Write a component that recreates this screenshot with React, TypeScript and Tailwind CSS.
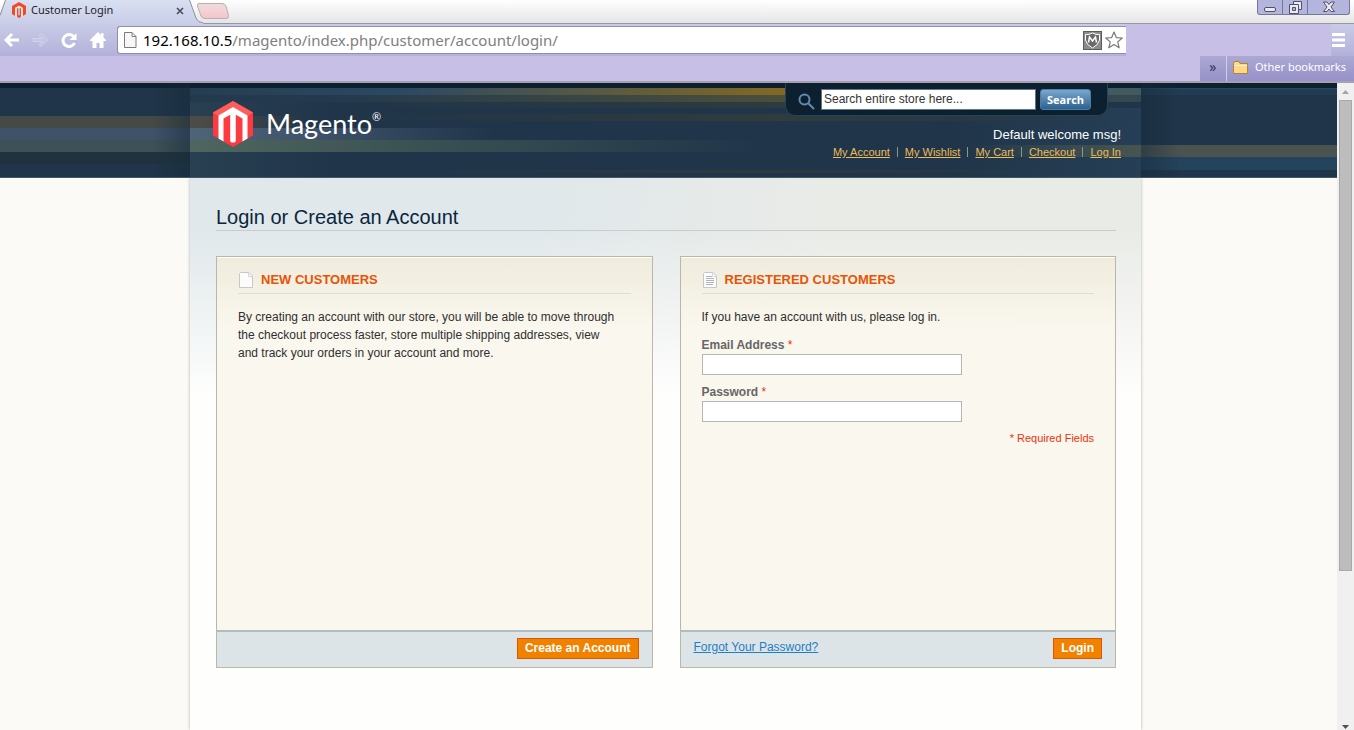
import type { ReactNode } from "react";

function MagentoMark({ className }: { className: string }) {
  return (
    <svg viewBox="0 0 40 46" className={className} aria-hidden="true">
      <path d="M20 0 40 11.5V34.5L20 46 0 34.5V11.5Z" fill="#fb3b41" />
      <path d="M20 0 40 11.5 34.5 15 20 6.5 5.5 15 0 11.5Z" fill="#ff5c5c" />
      <path d="M20 6 34.5 14.5V37.5L29.5 40.4V17.5L22.8 13.7V39.5Q22.8 41.5 20 41.5Q17.2 41.5 17.2 39.5V13.7L10.5 17.5V40.4L5.5 37.5V14.5Z" fill="#fff" />
    </svg>
  );
}

function PageIcon({ lines }: { lines?: boolean }) {
  return (
    <svg width="16" height="16" viewBox="0 0 16 16" fill="none" aria-hidden="true">
      <path d="M2.500 .5H11L14.500 4V15.500H1.500V1.500Z" fill="#fcfcfc" stroke="#c5c7c9" />
      <path d="M10.500 .5V4.500H14.500" stroke="#d5d7d9" />
      {lines && <path d="M4 4.500H10M4 6.500H12M4 8.500H12M4 10.500H12M4 12.500H11" stroke="#b0b2b4" />}
    </svg>
  );
}

function TabStrip() {
  return (
    <div className="relative flex h-6 justify-between bg-linear-to-b from-white to-[#e4e4e6]">
      <div className="absolute inset-x-0 bottom-0 h-px bg-[#98989e]" />
      <div className="relative flex h-6 w-[232px]">
        <svg width="232" height="24" viewBox="0 0 232 24" className="absolute inset-0" aria-hidden="true">
          <defs>
            <linearGradient id="tab" x1="0" y1="0" x2="0" y2="1">
              <stop offset="0" stopColor="#d9e0f1" />
              <stop offset="1" stopColor="#c9cde8" />
            </linearGradient>
            <linearGradient id="newTab" x1="0" y1="0" x2="0" y2="1">
              <stop offset="0" stopColor="#f0dcde" />
              <stop offset="1" stopColor="#f5c5ca" />
            </linearGradient>
          </defs>
          <path d="M0 24V16L5.500 0H189L196 18Q198 22.500 203 22.500V24Z" fill="url(#tab)" />
          <path d="M0 15.500 5.500 0M189.500 0 196 18Q198 22.500 203 22.500" fill="none" stroke="#8d8f9b" />
          <path d="M199 3.500H222Q225 3.500 226 6L228.500 15.500Q229 18.500 226 18.500H205Q202 18.500 201 16L197.500 6Q197 3.500 199 3.500Z" fill="url(#newTab)" stroke="#b5aeb2" />
        </svg>
        <div className="relative flex w-[184px] items-center pb-1 pl-3">
          <svg width="14" height="16" viewBox="0 0 14 16" aria-hidden="true">
            <path d="M7 0 14 4V12L11 14V6L7 3.700 3 6V14L0 12V4Z" fill="#f0492a" />
            <path d="M3 6 7 3.700 11 6V14L9 15V7H5V15L3 14Z" fill="#fbe3e0" />
            <path d="M5 6.500 6.300 5.800V13L7 13.500 7.700 13V5.800L9 6.500V14.800L7 16 5 14.800Z" fill="#f0492a" />
          </svg>
          <span className="ml-[5px] flex-1 text-[11px] text-[#1d1d28]">Customer Login</span>
          <button type="button" aria-label="Close tab" className="mt-px">
            <svg width="8" height="8" viewBox="0 0 8 8" fill="none" stroke="#4d4e5c" strokeWidth="1.700">
              <path d="M1 1 7 7M7 1 1 7" />
            </svg>
          </button>
        </div>
      </div>
      <div className="relative mr-1 flex h-[15px] rounded-b-[3px] border border-t-0 border-[#77779b] bg-[#b3b5dc]">
        <button type="button" aria-label="Minimize" className="flex w-[25px] items-center justify-center border-r border-[#77779b]">
          <svg width="13" height="13" viewBox="0 0 13 13">
            <rect x=".5" y="6.500" width="11" height="4" rx="1.500" fill="#e9e9f4" stroke="#50506a" />
          </svg>
        </button>
        <button type="button" aria-label="Restore" className="flex w-[25px] items-center justify-center border-r border-[#77779b]">
          <svg width="13" height="13" viewBox="0 0 13 13" fill="#e9e9f4" stroke="#50506a">
            <path d="M4.500 .5H12.500V8.500H4.500Z" />
            <path d="M.5 3.500H9.500V12.500H.5Z" />
            <path d="M3.500 6.500H6.500V9.500H3.500Z" fill="#b3b5dc" />
          </svg>
        </button>
        <button type="button" aria-label="Close" className="flex w-[41px] items-center justify-center">
          <svg width="12" height="12" viewBox="0 0 12 12">
            <path d="M.5 1H4L6 3.500 8 1H11.500L8 6 11.500 10.500H8L6 8 4 10.500H.5L4 6Z" fill="#e9e9f4" stroke="#50506a" />
          </svg>
        </button>
      </div>
    </div>
  );
}

function Toolbar() {
  return (
    <div className="flex h-8 items-center bg-linear-to-b from-[#c9cce7] to-[#b3b1da]">
      <div className="flex w-[117px] items-center gap-3 pl-1">
        <button type="button" aria-label="Back">
          <svg width="16" height="16" viewBox="0 0 16 16" fill="none" stroke="#fff" strokeWidth="3">
            <path d="M15 8H3M8 2 2 8 8 14" />
          </svg>
        </button>
        <button type="button" aria-label="Forward">
          <svg width="17" height="16" viewBox="0 0 17 16" fill="#c3c5e4" stroke="#d2d3ec">
            <path d="M1 6.500H10.500L7 3.500 9 1.500 15.500 8 9 14.500 7 12.500 10.500 9.500H1Z" />
          </svg>
        </button>
        <button type="button" aria-label="Reload">
          <svg width="17" height="17" viewBox="0 0 17 17" fill="none" stroke="#fff" strokeWidth="3">
            <path d="M13.500 11A6 6 0 1 1 12.500 4.500" />
            <path d="M15.500 1V8H8.500Z" fill="#fff" stroke="none" />
          </svg>
        </button>
        <button type="button" aria-label="Home">
          <svg width="16" height="16" viewBox="0 0 16 16" fill="#fff">
            <path d="M8 0 11 3V1H13.500V5.500L16 8V9H13.500V16H9.500V11H6.500V16H2.500V9H0V8Z" />
          </svg>
        </button>
      </div>
      <div className="flex h-7 min-w-0 flex-1 items-center rounded-l-[3px] border border-r-0 border-[#8d8fae] bg-white pl-1.5">
        <svg width="13" height="16" viewBox="0 0 13 16" fill="#f7f7f7" stroke="#7c7c7c" aria-hidden="true">
          <path d="M.5 .5H8L12 4.500V15.500H.5ZM8 .5V4.500H12" />
        </svg>
        <div className="ml-1.5 flex-1 truncate text-[15px] leading-6 text-[#808080]">
          <span className="text-black">192.168.10.5</span>/magento/index.php/customer/account/login/
        </div>
        <button type="button" aria-label="Site report">
          <svg width="19" height="19" viewBox="0 0 19 19">
            <rect x=".5" y=".5" width="18" height="18" fill="#8b8b8b" stroke="#5c5c5c" />
            <path d="M9.500 2Q13 4 16.500 3.500V9Q15.500 14 9.500 17Q3.500 14 2.500 9V3.500Q6 4 9.500 2Z" fill="#6b6b6b" stroke="#fff" />
            <path d="M5.500 11.500 6.500 6 9.500 10 12.500 6 13.500 11.500" fill="none" stroke="#fff" strokeWidth="1.500" />
          </svg>
        </button>
        <button type="button" aria-label="Bookmark this page" className="mx-[3px]">
          <svg width="18" height="18" viewBox="0 0 18 18" fill="#fff" stroke="#777" strokeLinejoin="round" strokeWidth="1.200">
            <path d="M9 1 11.300 6.600 17.300 7 12.700 10.900 14.200 16.800 9 13.600 3.800 16.800 5.300 10.900 .7 7 6.700 6.600Z" />
          </svg>
        </button>
      </div>
      <div className="h-full w-[205px] bg-[#c8bfe7]" />
      <button type="button" aria-label="Menu" className="w-[23px] pl-px">
        <svg width="14" height="14" viewBox="0 0 14 14" fill="#fff">
          <path d="M0 0H13V3H0ZM0 5.500H13V8.500H0ZM0 11H13V14H0Z" />
        </svg>
      </button>
    </div>
  );
}

function BookmarksBar() {
  return (
    <div className="flex h-[27px] justify-end border-b-2 border-[#a5a0b4] bg-[#c8bfe7]">
      <div className="flex bg-linear-to-b from-[#aba9d4] to-[#9791c8] text-[11px] text-white">
        <button type="button" aria-label="More bookmarks" className="w-[27px] border-r border-[#cfcde9] pb-1 text-[14px] text-[#33334a]">
          »
        </button>
        <button type="button" className="flex items-center gap-1.5 pr-2 pb-0.5 pl-1.5">
          <svg width="16" height="14" viewBox="0 0 16 14" fill="#fbd98a" stroke="#b98231" aria-hidden="true">
            <path d="M.5 2.500 1.500 .5H6L7 2.500H14.500V12.500H.5Z" />
            <path d="M1 4.500H14" stroke="#fff0c4" />
          </svg>
          Other bookmarks
        </button>
      </div>
    </div>
  );
}

const accountLinks = ["My Account", "My Wishlist", "My Cart", "Checkout", "Log In"];

function Header() {
  return (
    <header className="relative z-10 flex h-[95px] border-b border-[#405767] bg-[#203549]">
      <div className="flex-1 bg-[linear-gradient(to_right,transparent_80%,#15293a80),linear-gradient(#0d2030_0_5px,#203549_5px_33px,#454a46_33px_45px,#3f5268_45px_57px,#3e5156_57px_69px,#20323e_69px_81px,#203549_81px)]" />
      <div className="flex w-[951px] justify-between bg-[linear-gradient(#0d2030,#0d2030),linear-gradient(to_right,#263d50,#2b4963_22%,#836824_62%,#415a60_96%),linear-gradient(to_right,#233a4e_15%,#4b4e3b_62%,#33484f_96%),linear-gradient(to_right,#20354900_15%,#2d3b3e_62%,#203549),linear-gradient(to_right,#20354900_15%,#303c3d_62%,#20354900),linear-gradient(to_right,#4e4c47,#20354900_12%),linear-gradient(to_right,#506479,#3b5067_15%,#20354900_32%),linear-gradient(to_right,#4f665f,#3d5253_22%,#20354900_60%),linear-gradient(to_right,#20354900_82%,#47554f),linear-gradient(to_right,#20354900_20%,#2d3b3e_60%,#20354900),linear-gradient(to_right,#293f52,#203549_15%,#203549_80%,#263f56)] bg-[size:100%_5px,100%_7px,100%_7px,100%_6px,100%_7px,100%_12px,100%_12px,100%_12px,100%_12px,100%_3px,100%_100%] bg-[position:0_0,0_5px,0_12px,0_19px,0_31px,0_33px,0_45px,0_57px,0_62px,0_87px,0_0] bg-no-repeat">
        <a href="#home" className="mt-[18px] ml-[23px] flex h-[46px] gap-[13px] text-white">
          <MagentoMark className="h-[46px] w-10" />
          <span className="flex font-[Lato,sans-serif] text-[27px] leading-[46px]">
            Magento<span className="text-[11px] leading-8">®</span>
          </span>
        </a>
        <div className="flex flex-col items-end">
          <form className="mr-[33px] flex h-[33px] w-[323px] items-center rounded-b-[10px] border border-t-0 border-[#24435c] bg-[#0d2030] pl-3">
            <label htmlFor="search" aria-label="Search" className="mt-1">
              <svg width="17" height="17" viewBox="0 0 17 17" fill="none" stroke="#608bb2" strokeWidth="2">
                <circle cx="6.500" cy="6.500" r="5" />
                <path d="M10.500 10.500 16 16" />
              </svg>
            </label>
            <input
              id="search"
              defaultValue="Search entire store here..."
              className="ml-1.5 h-[21px] w-[215px] border border-[#5c7989] bg-white px-0.5 text-[12px] text-[#333]"
            />
            <button
              type="button"
              className="ml-1 h-[21px] w-[51px] rounded-[3px] border border-[#4a7da8] bg-linear-to-b from-[#7ba8cd] to-[#2b628f] font-['Open_Sans',sans-serif] text-[11px] leading-[19px] font-bold text-white"
            >
              Search
            </button>
          </form>
          <p className="mt-2.5 mr-5 text-[13px] leading-[18px] text-white">Default welcome msg!</p>
          <ul className="mr-5 flex text-[11px] leading-4 text-[#ebbc58]">
            {accountLinks.map((link, i) => (
              <li key={link} className="flex items-center">
                {i > 0 && <span className="mx-[7px] h-2.5 w-px bg-[#8a9a7c]" />}
                <a href="#account" className="underline">
                  {link}
                </a>
              </li>
            ))}
          </ul>
        </div>
      </div>
      <div className="flex-1 bg-[linear-gradient(to_right,#15293a80,transparent_20%),linear-gradient(#0d2030_0_5px,#29475d_5px_6px,#203d54_6px_12px,#203549_12px_62px,#4b5350_62px_74px,#24435c_74px_87px,#203549_87px)] pr-1.5" />
    </header>
  );
}

type PanelProps = {
  title: string;
  icon: ReactNode;
  footer: ReactNode;
  children: ReactNode;
};

function Panel({ title, icon, footer, children }: PanelProps) {
  return (
    <section className="flex flex-1 flex-col border border-[#bbb6a5]">
      <div className="min-h-[373px] flex-1 border-t border-white bg-[#faf7ee] bg-[linear-gradient(#efebdd,#faf7ee_70px)] px-[21px] pt-3.5">
        <h2 className="flex h-[22px] items-start gap-[7px] border-b border-[#dddcd6] text-[13px] leading-[15px] font-bold text-[#e65505]">
          {icon}
          {title}
        </h2>
        {children}
      </div>
      <div className="flex h-[37px] items-start border-t-2 border-[#b0bcc0] bg-[#dde4e7] px-[13px] pt-1.5">{footer}</div>
    </section>
  );
}

function OrangeButton({ children }: { children: ReactNode }) {
  return (
    <button type="button" className="ml-auto h-[21px] border border-[#de5400] bg-[#f18200] px-[7px] text-[12px] leading-[19px] font-bold text-white">
      {children}
    </button>
  );
}

function Field({ id, label, type }: { id: string; label: string; type: string }) {
  return (
    <div className="mb-2">
      <label htmlFor={id} className="block text-[12px] leading-[18px] font-bold text-[#666]">
        {label} <span className="font-normal text-[#eb340a]">*</span>
      </label>
      <input id={id} type={type} className="block h-[21px] w-[260px] border border-[#b6b6b6] bg-white px-1" />
    </div>
  );
}

function LoginPage() {
  return (
    <div className="flex flex-1">
      <div className="flex-1" />
      <main className="w-[951px] bg-[#fefefd] bg-[linear-gradient(#fefefd00_0,#fefefd00_50px,#fefefd_220px),linear-gradient(100deg,#e0e8eb_35%,#e9ebe7_65%)] bg-[size:100%_220px] bg-no-repeat pr-[25px] pl-[26px] shadow-[0_0_3px_#0000004d]">
        <h1 className="mt-[25px] h-7 border-b border-[#c9cccc] text-[20px] leading-7 text-[#0a263c]">Login or Create an Account</h1>
        <div className="mt-[25px] flex gap-[27px]">
          <Panel title="NEW CUSTOMERS" icon={<PageIcon />} footer={<OrangeButton>Create an Account</OrangeButton>}>
            <p className="mt-3.5 pr-2.5 text-[12px] leading-[18px] text-[#2f2f2f]">
              By creating an account with our store, you will be able to move through the checkout process faster, store multiple
              shipping addresses, view and track your orders in your account and more.
            </p>
          </Panel>
          <Panel
            title="REGISTERED CUSTOMERS"
            icon={<PageIcon lines />}
            footer={
              <>
                <a href="#forgot" className="text-[12px] leading-[18px] text-[#1e7ec8] underline">
                  Forgot Your Password?
                </a>
                <OrangeButton>Login</OrangeButton>
              </>
            }
          >
            <p className="mt-3.5 mb-2.5 text-[12px] leading-[18px] text-[#2f2f2f]">If you have an account with us, please log in.</p>
            <Field id="email" label="Email Address" type="email" />
            <Field id="password" label="Password" type="password" />
            <p className="text-right text-[11px] leading-4 text-[#eb340a]">* Required Fields</p>
          </Panel>
        </div>
      </main>
      <div className="flex-1 pr-1.5" />
    </div>
  );
}

function ScrollBar() {
  return (
    <div className="flex w-[17px] flex-col items-center bg-[#f0f0f0]">
      <svg width="17" height="17" viewBox="0 0 17 17" fill="#a3a3a3" aria-hidden="true">
        <path d="M5 11 8.500 7 12 11Z" />
      </svg>
      <div className="w-[13px] flex-[43] border border-[#a8a8a8] bg-[#bdbdbd]" />
      <div className="flex-[13]" />
      <svg width="17" height="17" viewBox="0 0 17 17" fill="#505050" aria-hidden="true">
        <path d="M5 12 8.500 16 12 12Z" />
      </svg>
    </div>
  );
}

export default function App() {
  return (
    <div className="flex min-h-screen flex-col font-['Liberation_Sans',Arial,sans-serif]">
      <div className="font-['Noto_Sans',sans-serif]">
        <TabStrip />
        <Toolbar />
        <BookmarksBar />
      </div>
      <div className="flex flex-1 bg-[#fbfaf6]">
        <div className="flex min-w-0 flex-1 flex-col">
          <Header />
          <LoginPage />
        </div>
        <ScrollBar />
      </div>
    </div>
  );
}
